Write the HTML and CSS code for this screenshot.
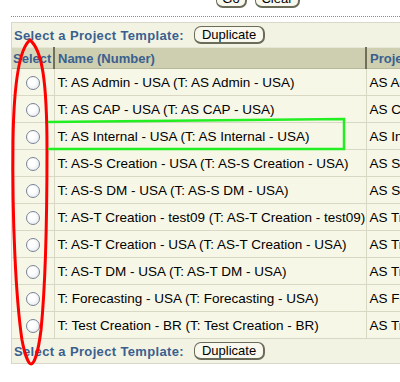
FILE: index.html
```html
<!DOCTYPE html>
<html>
<head>
<meta charset="utf-8">
<link rel="stylesheet" href="styles.css">
</head>
<body>
<div class="page">
  <div class="topbar">
    <span class="btn btn-go">Go</span>
    <span class="btn btn-clear">Clear</span>
  </div>
  <div class="dots"></div>
  <div class="panel">
    <div class="panel-head">
      <span class="title">Select a Project Template:</span>
      <span class="btn">Duplicate</span>
    </div>
    <table class="grid">
      <colgroup><col class="c-sel"><col class="c-name"><col class="c-proj"></colgroup>
      <thead>
        <tr><th class="h-sel">Select</th><th class="h-name">Name (Number)</th><th class="h-proj">Project</th></tr>
      </thead>
      <tbody>
        <tr><td class="sel"><span class="radio"></span></td><td>T: AS Admin - USA (T: AS Admin - USA)</td><td>AS Admin</td></tr>
        <tr><td class="sel"><span class="radio"></span></td><td>T: AS CAP - USA (T: AS CAP - USA)</td><td>AS CAP</td></tr>
        <tr><td class="sel"><span class="radio"></span></td><td>T: AS Internal - USA (T: AS Internal - USA)</td><td>AS Internal</td></tr>
        <tr><td class="sel"><span class="radio"></span></td><td>T: AS-S Creation - USA (T: AS-S Creation - USA)</td><td>AS Sales</td></tr>
        <tr><td class="sel"><span class="radio"></span></td><td>T: AS-S DM - USA (T: AS-S DM - USA)</td><td>AS Sales</td></tr>
        <tr><td class="sel"><span class="radio"></span></td><td>T: AS-T Creation - test09 (T: AS-T Creation - test09)</td><td>AS Training</td></tr>
        <tr><td class="sel"><span class="radio"></span></td><td>T: AS-T Creation - USA (T: AS-T Creation - USA)</td><td>AS Training</td></tr>
        <tr><td class="sel"><span class="radio"></span></td><td>T: AS-T DM - USA (T: AS-T DM - USA)</td><td>AS Training</td></tr>
        <tr><td class="sel"><span class="radio"></span></td><td>T: Forecasting - USA (T: Forecasting - USA)</td><td>AS Forecasting</td></tr>
        <tr><td class="sel"><span class="radio"></span></td><td>T: Test Creation - BR (T: Test Creation - BR)</td><td>AS Training</td></tr>
      </tbody>
    </table>
    <div class="panel-head panel-foot">
      <span class="title">Select a Project Template:</span>
      <span class="btn">Duplicate</span>
    </div>
  </div>
  <svg class="marks" width="400" height="382" viewBox="0 0 400 382">
    <path d="M30,40 C20,48 14,80 13,140 C12,220 16,300 22,340 C25,356 29,364 31,364 C34,364 38,354 41,330 C45,290 47,220 47,150 C47,80 42,50 30,40 Z" fill="none" stroke="#ff0000" stroke-width="3"/>
    <path d="M48,122 L344,119 L344,149 L48,149" fill="none" stroke="#22ee22" stroke-width="2.5"/>
  </svg>
</div>
</body>
</html>
```
FILE: styles.css
```css
html, body { margin: 0; padding: 0; background: #fff; }
.page { position: relative; width: 400px; height: 382px; overflow: hidden; font-family: "Liberation Sans", Arial, sans-serif; }
.topbar { display: flex; gap: 8px; padding-left: 216px; margin-top: -10px; height: 26px; box-sizing: border-box; }
.btn {
  display: inline-flex; align-items: center; justify-content: center;
  height: 18px; box-sizing: border-box; padding: 0 7px;
  border: 1px solid #6b6b5a; border-radius: 7px;
  border-right-width: 2px; border-bottom-width: 2px;
  background: #f8f8ef; color: #000; font-size: 13px; line-height: 1;
}
.btn-go { width: 31px; }
.btn-clear { width: 45px; }
.dots { margin-left: 11px; border-top: 1px dotted #8a8a8a; height: 0; }
.panel { margin: 5px 0 0 11px; width: 420px; background: #f3f3e3; border: 1px solid #d8d8c6; border-right: none; }
.panel-head { display: flex; align-items: center; gap: 10px; height: 24px; padding-left: 2px; }
.panel-foot { height: 24px; }
.title { color: #3a5f8f; font-weight: bold; font-size: 13px; letter-spacing: 0.35px; }
.grid { border-collapse: collapse; table-layout: fixed; width: 420px; font-size: 13.5px; }
.c-sel { width: 42px; }
.c-name { width: 312px; }
.c-proj { width: 66px; }
th { height: 20px; padding: 0 0 0 3px; text-align: left; color: #3a5f8f; font-weight: bold; font-size: 13px; background: #cdcfb0; border-top: 1px solid #e6e7d4; border-bottom: 1px solid #b8b99c; white-space: nowrap; overflow: hidden; }
.h-sel { background: #d6d8bd; padding-left: 1px; }
.h-name { border-left: 2px solid #6f6f5a; }
.h-proj { border-left: 2px solid #6f6f5a; }
td { height: 26px; padding: 0 0 0 3px; background: #f7f7e8; border-bottom: 1px solid #d8d8c4; border-left: 1px solid #d8d8c4; white-space: nowrap; overflow: hidden; color: #000; }
td.sel { text-align: center; padding: 0; border-left: none; }
.radio { display: inline-block; width: 12px; height: 12px; border-radius: 50%; border: 1px solid #7a8496; background: radial-gradient(circle at 40% 40%, #ffffff 30%, #dfe3ea 100%); vertical-align: middle; }
.marks { position: absolute; left: 0; top: 0; pointer-events: none; }
```
